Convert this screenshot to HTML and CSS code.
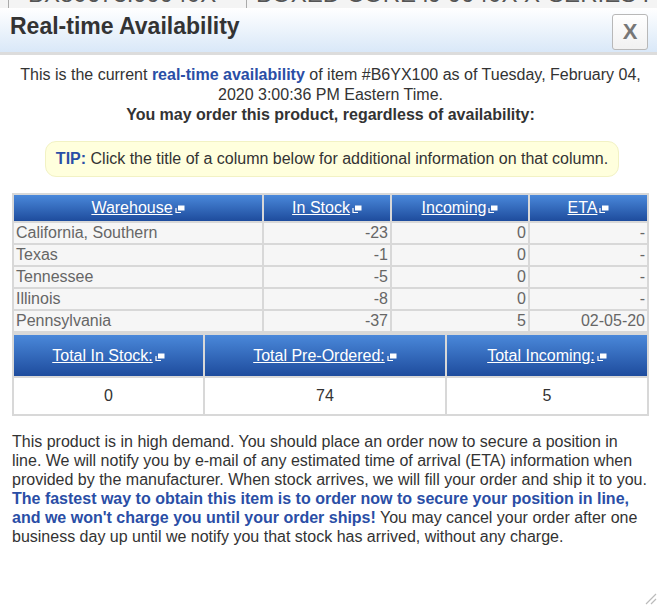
FILE: index.html
```html
<!DOCTYPE html>
<html>
<head>
<meta charset="utf-8">
<link rel="stylesheet" href="styles.css">
</head>
<body>
<div class="under">
  <div class="under-cell c1"><span>BX80673I99940X</span></div>
  <div class="under-cell c2"><span>BOXED CORE i9 9940X X-SERIES PROCESSOR</span></div>
</div>
<div class="dialog">
  <div class="titlebar">
    <h1 class="title">Real-time Availability</h1>
    <button class="close">X</button>
  </div>
  <div class="content">
    <p class="intro">This is the current <b class="blue">real-time availability</b> of item #B6YX100 as of Tuesday, February 04, 2020 3:00:36 PM Eastern Time.<br><b>You may order this product, regardless of availability:</b></p>
    <div class="tip"><b class="blue">TIP:</b> Click the title of a column below for additional information on that column.</div>
    <table class="stock">
      <colgroup><col class="w1"><col class="w2"><col class="w3"><col class="w4"></colgroup>
      <thead>
        <tr>
          <th><a href="#">Warehouse</a><svg class="pop" width="10" height="8" viewBox="0 0 10 8"><rect x="3" y="0.5" width="6.5" height="5" fill="#fff"/><path d="M1 3V7.5H6" stroke="#fff" stroke-width="1.2" fill="none"/></svg></th>
          <th><a href="#">In Stock</a><svg class="pop" width="10" height="8" viewBox="0 0 10 8"><rect x="3" y="0.5" width="6.5" height="5" fill="#fff"/><path d="M1 3V7.5H6" stroke="#fff" stroke-width="1.2" fill="none"/></svg></th>
          <th><a href="#">Incoming</a><svg class="pop" width="10" height="8" viewBox="0 0 10 8"><rect x="3" y="0.5" width="6.5" height="5" fill="#fff"/><path d="M1 3V7.5H6" stroke="#fff" stroke-width="1.2" fill="none"/></svg></th>
          <th><a href="#">ETA</a><svg class="pop" width="10" height="8" viewBox="0 0 10 8"><rect x="3" y="0.5" width="6.5" height="5" fill="#fff"/><path d="M1 3V7.5H6" stroke="#fff" stroke-width="1.2" fill="none"/></svg></th>
        </tr>
      </thead>
      <tbody>
        <tr><td>California, Southern</td><td class="r">-23</td><td class="r">0</td><td class="r">-</td></tr>
        <tr><td>Texas</td><td class="r">-1</td><td class="r">0</td><td class="r">-</td></tr>
        <tr><td>Tennessee</td><td class="r">-5</td><td class="r">0</td><td class="r">-</td></tr>
        <tr><td>Illinois</td><td class="r">-8</td><td class="r">0</td><td class="r">-</td></tr>
        <tr><td>Pennsylvania</td><td class="r">-37</td><td class="r">5</td><td class="r">02-05-20</td></tr>
      </tbody>
    </table>
    <table class="totals">
      <colgroup><col class="t1"><col class="t2"><col class="t3"></colgroup>
      <thead>
        <tr>
          <th><a href="#">Total In Stock:</a><svg class="pop" width="10" height="8" viewBox="0 0 10 8"><rect x="3" y="0.5" width="6.5" height="5" fill="#fff"/><path d="M1 3V7.5H6" stroke="#fff" stroke-width="1.2" fill="none"/></svg></th>
          <th><a href="#">Total Pre-Ordered:</a><svg class="pop" width="10" height="8" viewBox="0 0 10 8"><rect x="3" y="0.5" width="6.5" height="5" fill="#fff"/><path d="M1 3V7.5H6" stroke="#fff" stroke-width="1.2" fill="none"/></svg></th>
          <th><a href="#">Total Incoming:</a><svg class="pop" width="10" height="8" viewBox="0 0 10 8"><rect x="3" y="0.5" width="6.5" height="5" fill="#fff"/><path d="M1 3V7.5H6" stroke="#fff" stroke-width="1.2" fill="none"/></svg></th>
        </tr>
      </thead>
      <tbody>
        <tr><td>0</td><td>74</td><td>5</td></tr>
      </tbody>
    </table>
    <p class="note">This product is in high demand. You should place an order now to secure a position in line. We will notify you by e-mail of any estimated time of arrival (ETA) information when provided by the manufacturer. When stock arrives, we will fill your order and ship it to you. <b class="blue">The fastest way to obtain this item is to order now to secure your position in line, and we won't charge you until your order ships!</b> You may cancel your order after one business day up until we notify you that stock has arrived, without any charge.</p>
  </div>
  <svg class="grip" width="14" height="14" viewBox="0 0 14 14"><path d="M13 3L3 13M13 8L8 13" stroke="#bbb" stroke-width="1.2"/></svg>
</div>
</body>
</html>
```

FILE: styles.css
```css
html, body {
  margin: 0;
  padding: 0;
  background: #fff;
  font-family: "Liberation Sans", Arial, sans-serif;
  color: #333;
}
.under {
  display: flex;
  height: 8px;
  overflow: hidden;
  background: #f4f4f4;
  color: #555;
  font-size: 24px;
  line-height: 24px;
}
.under-cell {
  border-left: 1px solid #aaa;
  white-space: nowrap;
  overflow: hidden;
}
.under-cell span {
  display: block;
  margin-top: -18px;
}
.c1 {
  width: 218px;
  margin-left: 8px;
  padding-left: 19px;
}
.c2 {
  flex: 1;
  padding-left: 9px;
}
.dialog {
  position: relative;
  height: 597px;
}
.titlebar {
  display: flex;
  align-items: center;
  justify-content: space-between;
  height: 44px;
  padding: 0 9px 0 10px;
  background: linear-gradient(#ffffff, #d9e8f8);
  border-bottom: 3px solid #dcdcdc;
}
.title {
  margin: 0 0 7px;
  font-size: 23px;
  font-weight: bold;
  color: #333;
}
.close {
  width: 36px;
  height: 36px;
  margin-top: 4px;
  padding: 0;
  border: 1px solid #b8b8b8;
  border-radius: 3px;
  background: linear-gradient(#ffffff, #f1f1f1);
  color: #777;
  font-family: "Liberation Sans", Arial, sans-serif;
  font-weight: bold;
  font-size: 22px;
  line-height: 34px;
}
.content {
  padding: 0 8px 0 12px;
  font-size: 16px;
}
.blue {
  color: #2a4ea6;
}
.intro {
  margin: 10px 0 0;
  text-align: center;
  line-height: 20px;
  padding: 0 6px;
}
.tip {
  margin: 16px 30px 0 33px;
  height: 34px;
  line-height: 34px;
  text-align: center;
  background: #ffffdd;
  border: 1px solid #f2f2c4;
  border-radius: 11px;
}
table {
  width: 637px;
  border-collapse: separate;
  border-spacing: 2px;
  background: #d8d8d8;
  table-layout: fixed;
}
.stock {
  margin-top: 16px;
}
th {
  background: linear-gradient(#4a88da, #1e4c9d);
  font-weight: normal;
  padding: 0;
  white-space: nowrap;
}
th a {
  color: #fff;
  text-decoration: underline;
}
.pop {
  margin-left: 2px;
  vertical-align: 0;
}
.stock th {
  height: 26px;
}
.w1 { width: 248px; }
.w2 { width: 126px; }
.w3 { width: 136px; }
.w4 { width: 117px; }
.stock td {
  background: #f6f6f6;
  color: #666;
  height: 20px;
  padding: 0 2px;
  line-height: 20px;
}
.stock td.r {
  text-align: right;
}
.totals th {
  height: 41px;
}
.t1 { width: 189px; }
.t2 { width: 240px; }
.t3 { width: 200px; }
.totals td {
  background: #fff;
  height: 36px;
  text-align: center;
  color: #333;
  padding: 0;
}
.note {
  margin: 16px 0 0;
  line-height: 19px;
}
.grip {
  position: absolute;
  right: 0;
  bottom: 0;
}
```
